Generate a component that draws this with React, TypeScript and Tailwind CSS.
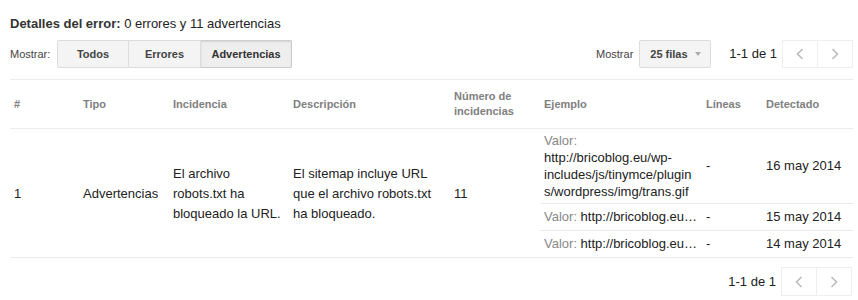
import React from "react";

function Chevron({ dir }: { dir: "l" | "r" }) {
  return (
    <svg width="8" height="12" viewBox="0 0 8 12" fill="none">
      {dir === "l" ? (
        <path d="M6.5 1 L1.5 6 L6.5 11" stroke="#bbb" strokeWidth="1.6" />
      ) : (
        <path d="M1.5 1 L6.5 6 L1.5 11" stroke="#bbb" strokeWidth="1.6" />
      )}
    </svg>
  );
}

function Pager({ h }: { h: string }) {
  return (
    <div className="flex items-center">
      <span className="text-[13px] text-[#222] mr-[5px]">1-1 de 1</span>
      <div className={`flex ${h}`}>
        <div className="w-[36px] h-full border border-[#eeeeee] bg-white flex items-center justify-center">
          <Chevron dir="l" />
        </div>
        <div className="w-[35px] h-full border border-l-0 border-[#eeeeee] bg-white flex items-center justify-center">
          <Chevron dir="r" />
        </div>
      </div>
    </div>
  );
}

export default function App() {
  const th = "text-left align-middle font-bold text-[11px] leading-[15px] text-[#808080] pl-[4px] border-b border-[#ebebeb] py-[9px]";
  const tdLeft = "align-middle text-[13px] leading-[20px] text-[#222] pl-[4px] pr-[6px] pt-[2px] border-b border-[#ebebeb]";
  const sub = "align-middle text-[13px] leading-[18px] text-[#222] pl-[4px] py-[4px] border-b border-[#ebebeb]";
  return (
    <div className="w-[858px] h-[300px] bg-white pl-[10px] pr-[5px] font-['Liberation_Sans',Arial,sans-serif] text-[#222] overflow-hidden">
      <div className="pt-[16px] h-[32px] text-[13px] leading-[16px]">
        <span className="font-bold text-[#333]">Detalles del error:</span> 0 errores y 11 advertencias
      </div>
      <div className="mt-[8px] pb-[11px] border-b border-[#ebebeb] flex items-center">
        <span className="w-[47px] text-[11px] text-[#444]">Mostrar:</span>
        <div className="flex h-[28px]">
          <div className="w-[72px] h-full border border-[#dcdcdc] bg-[#f4f4f4] text-[11px] font-bold text-[#444] flex items-center justify-center rounded-l-[2px]">
            Todos
          </div>
          <div className="w-[72px] h-full border border-l-0 border-[#dcdcdc] bg-[#f4f4f4] text-[11px] font-bold text-[#444] flex items-center justify-center">
            Errores
          </div>
          <div className="w-[91px] h-full border border-l-0 border-[#cccccc] bg-[#eeeeee] shadow-[inset_0_1px_2px_rgba(0,0,0,0.1)] text-[11px] font-bold text-[#333] flex items-center justify-center rounded-r-[2px]">
            Advertencias
          </div>
        </div>
        <div className="ml-auto flex items-center">
          <span className="text-[11px] text-[#444] mr-[6px]">Mostrar</span>
          <div className="w-[72px] h-[28px] border border-[#dcdcdc] bg-[#f4f4f4] rounded-[2px] flex items-center pl-[10px]">
            <span className="text-[11px] font-bold text-[#444]">25 filas</span>
            <span className="ml-[7px] w-0 h-0 border-x-[3.5px] border-x-transparent border-t-[4px] border-t-[#aaa]" />
          </div>
          <div className="ml-[18px]">
            <Pager h="h-[28px]" />
          </div>
        </div>
      </div>
      <table className="table-fixed border-separate border-spacing-0 w-[843px]">
        <colgroup>
          <col className="w-[69px]" />
          <col className="w-[90px]" />
          <col className="w-[120px]" />
          <col className="w-[161px]" />
          <col className="w-[90px]" />
          <col className="w-[162px]" />
          <col className="w-[60px]" />
          <col className="w-[91px]" />
        </colgroup>
        <thead>
          <tr>
            <th className={th}>#</th>
            <th className={th}>Tipo</th>
            <th className={th}>Incidencia</th>
            <th className={th}>Descripción</th>
            <th className={th}>
              Número de
              <br />
              incidencias
            </th>
            <th className={th}>Ejemplo</th>
            <th className={th}>Líneas</th>
            <th className={th}>Detectado</th>
          </tr>
        </thead>
        <tbody>
          <tr>
            <td rowSpan={3} className={tdLeft}>1</td>
            <td rowSpan={3} className={tdLeft}>Advertencias</td>
            <td rowSpan={3} className={tdLeft}>El archivo robots.txt ha bloqueado la URL.</td>
            <td rowSpan={3} className={tdLeft}>El sitemap incluye URL que el archivo robots.txt ha bloqueado.</td>
            <td rowSpan={3} className={tdLeft}>11</td>
            <td className="align-middle text-[13px] leading-[17px] text-[#222] pl-[4px] pr-[6px] pt-[3px] pb-[3px] border-b border-[#ebebeb] [overflow-wrap:anywhere]">
              <span className="text-[#888]">Valor: </span>http://bricoblog.eu/wp-includes/js/tinymce/plugins/wordpress/img/trans.gif
            </td>
            <td className="align-middle text-[13px] text-[#222] pl-[4px] border-b border-[#ebebeb]">-</td>
            <td className="align-middle text-[13px] text-[#222] pl-[4px] border-b border-[#ebebeb]">16 may 2014</td>
          </tr>
          <tr>
            <td className={`${sub} pr-0`}>
              <div className="whitespace-nowrap overflow-hidden">
                <span className="text-[#888]">Valor: </span>http://bricoblog.eu…
              </div>
            </td>
            <td className={sub}>-</td>
            <td className={sub}>15 may 2014</td>
          </tr>
          <tr>
            <td className={`${sub} pr-0`}>
              <div className="whitespace-nowrap overflow-hidden">
                <span className="text-[#888]">Valor: </span>http://bricoblog.eu…
              </div>
            </td>
            <td className={sub}>-</td>
            <td className={sub}>14 may 2014</td>
          </tr>
        </tbody>
      </table>
      <div className="mt-[9px] flex justify-end pr-[1px]">
        <Pager h="h-[29px]" />
      </div>
    </div>
  );
}
